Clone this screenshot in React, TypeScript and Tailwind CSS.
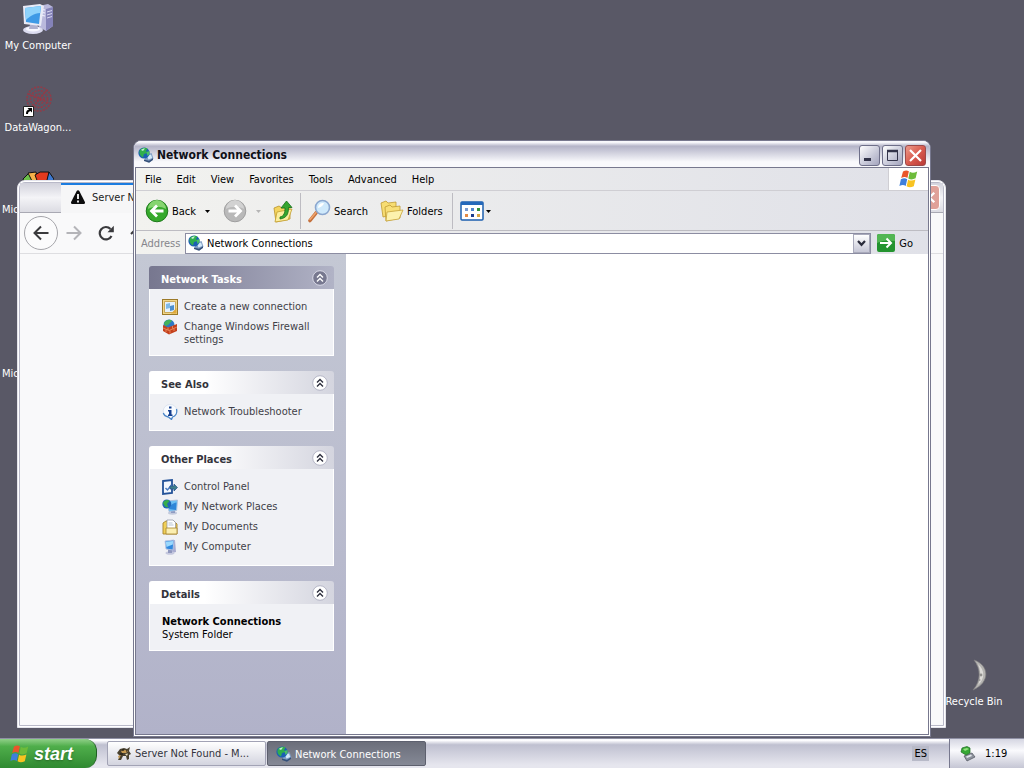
import type { ReactNode } from 'react';
import clsx from 'clsx';

const uiFont = "font-['DejaVu_Sans_Condensed','DejaVu_Sans','Noto_Sans',sans-serif]";

type IconProps = { className?: string };

function GlobeIcon({ className = 'size-4' }: IconProps) {
  return (
    <svg viewBox="0 0 16 16" className={className}>
      <path d="M8 8l5.500-2 2 5.500-4 4-5-3z" fill="#7f9dc4" />
      <path d="M9 9l4-1.500 1.200 3.500-3.700 1.500z" fill="#d3e9f8" />
      <path d="M6 12.500l5 1.200 4-2.400v1.700l-4 2.700-5-1.700z" fill="#35507a" />
      <circle cx="6" cy="6" r="5.600" fill="#1b5fb4" />
      <path d="M2 3c2-2.500 6-3 7.500-1.500L8 4l1.500 2L6 7l-1 3.500C2 9 .6 6 2 3z" fill="#2fae4e" />
      <path d="M8.500 5l3-1v3l-2 2z" fill="#47c065" />
      <path d="M3 3c1-1 2-1.500 4-1.500L5 4z" fill="#c4f0cd" />
    </svg>
  );
}

function ComputerIcon({ className = 'size-4' }: IconProps) {
  return (
    <svg viewBox="0 0 32 32" className={className}>
      <path d="M17 3l9-2 5 3v19l-7 5-7-4z" fill="#b9b8dc" />
      <path d="M24 6l7-2v19l-7 5z" fill="#8482b8" />
      <path d="M18 6l5 1M18 9l5 1M18 12l5 1" stroke="#f2f1ff" strokeWidth="1.200" />
      <path d="M25 9l5-1.500M25 12l5-1.500M25 15l5-1.500" stroke="#d9d8f2" strokeWidth="1" />
      <ellipse cx="11" cy="27" rx="10" ry="4" fill="#dcdcf0" />
      <ellipse cx="11" cy="26" rx="7" ry="2.500" fill="#f8f8ff" />
      <path d="M8 21h7l1 5H7z" fill="#aeb0cf" />
      <path d="M1 3l17-2 4 2-3 20-17-2z" fill="#e8eaf6" />
      <path d="M3 5l16-2-2 18-13-2z" fill="#3e9ae6" />
      <path d="M3 5l16-2-1 7C12 10 7 14 4 17z" fill="#8fd3fb" />
    </svg>
  );
}

function WindowsFlag({ className = 'size-5' }: IconProps) {
  return (
    <svg viewBox="0 0 20 20" className={className}>
      <path d="M4 2.500C6.500 1 8.200 1.200 9.900 2.300L8.400 9C6.600 7.800 4.700 7.800 2.200 9.100z" fill="#e9562b" />
      <path d="M10.800 2.800c2 1.200 4.400 1.200 7.400-.3l-1.600 6.800c-2.800 1.400-5 1.400-7.300.2z" fill="#6dbb3a" />
      <path d="M1.900 10.200c2.500-1.300 4.500-1.200 6.300 0l-1.500 6.700C5 15.800 2.900 15.700.4 17z" fill="#3f7fdb" />
      <path d="M9.100 10.700c2.100 1.200 4.500 1.100 7.300-.2l-1.600 6.700c-2.800 1.400-5.200 1.300-7.200.1z" fill="#f8c321" />
    </svg>
  );
}

function FolderUpIcon() {
  return (
    <svg viewBox="0 0 24 24" className="size-6">
      <path d="M3 9l5-2 3 2 8-1v12l-14 3z" fill="#f4d45e" stroke="#b9932a" strokeWidth=".8" />
      <path d="M6 13l15-3-4 11-13 2z" fill="#fcee9d" stroke="#c49f31" strokeWidth=".8" />
      <path d="M9 18c4-1 5-4 5-9h-4l5.500-7 5.500 6.500h-3.500c0 7-2 10.500-8.500 11.500z" fill="#35a52f" stroke="#16701a" strokeWidth=".8" />
    </svg>
  );
}

function FoldersIcon() {
  return (
    <svg viewBox="0 0 24 24" className="size-6">
      <path d="M1 4l5-2 2 2 8-1v12L3 18z" fill="#f7dd72" stroke="#bf9a32" strokeWidth=".8" />
      <path d="M5 8l5-2 2 2 8-1v12L6 22z" fill="#f8df77" stroke="#bf9a32" strokeWidth=".8" />
      <path d="M7 13l16-2-4 9-13 2z" fill="#fdf2ad" stroke="#c7a33b" strokeWidth=".8" />
    </svg>
  );
}

function SearchIcon() {
  return (
    <svg viewBox="0 0 24 24" className="size-6">
      <path d="M9 14l-6 7.500" stroke="#c4703c" strokeWidth="3.600" strokeLinecap="round" />
      <path d="M9 13.500l-6 7" stroke="#f0a36b" strokeWidth="1.500" strokeLinecap="round" />
      <circle cx="15.500" cy="8.500" r="7" fill="#cfe9fb" stroke="#8ba7cf" strokeWidth="1.600" />
      <path d="M11 9a5 5 0 0 1 6-5c-1 3-3 4-6 5z" fill="#fff" />
    </svg>
  );
}

function RoundArrowIcon({ direction }: { direction: 'back' | 'forward' }) {
  const back = direction === 'back';
  return (
    <svg viewBox="0 0 24 24" className="size-6">
      <circle cx="12" cy="12" r="10.800" fill={back ? '#36a92c' : '#b9b9b9'} stroke={back ? '#1f7a1c' : '#9f9f9f'} />
      <path d="M3 10a9 9 0 0 1 18 0c-5-3-13-3-18 0z" fill={back ? '#86d570' : '#d2d2d2'} />
      <path
        d={back ? 'M18.500 12H7M12 6.500L6.500 12l5.500 5.500' : 'M5.500 12H17M12 6.500l5.500 5.500-5.500 5.500'}
        fill="none"
        stroke="#fff"
        strokeWidth="2.800"
      />
    </svg>
  );
}

function ViewsIcon() {
  return (
    <svg viewBox="0 0 24 20" className="h-5 w-6">
      <rect x="1" y="1" width="22" height="18" rx="1" fill="#fff" stroke="#1d5fae" strokeWidth="1.500" />
      <path d="M1 1h22v3H1z" fill="#2468ba" />
      <path d="M5 7h3v3H5z" fill="#7a9bd0" />
      <path d="M11 7h3v3h-3z" fill="#4e86cf" />
      <path d="M17 7h3v3h-3z" fill="#31923c" />
      <path d="M5 13h3v3H5z" fill="#e58a43" />
      <path d="M11 13h3v3h-3z" fill="#1c3c8c" />
      <path d="M17 13h3v3h-3z" fill="#d9a640" />
    </svg>
  );
}

function NewConnectionIcon() {
  return (
    <svg viewBox="0 0 16 16" className="size-4">
      <rect x=".5" y=".5" width="15" height="15" fill="#f0d68a" stroke="#9c7a29" />
      <path d="M2.500 2.500h11v11h-11z" fill="#e4f1fb" stroke="#c39a3d" strokeWidth=".8" />
      <path d="M4 5l4-1v5l-4 1z" fill="#7fb9e6" />
      <path d="M8 7l4-1v5l-4 1z" fill="#4d8fcd" />
      <path d="M9 14.500l5.500-5.500v5.500z" fill="#e0a93a" />
    </svg>
  );
}

function FirewallIcon() {
  return (
    <svg viewBox="0 0 16 16" className="size-4">
      <circle cx="7" cy="6" r="5.500" fill="#2e78c4" />
      <path d="M2 4c2-4 7-4 8-2L6 6 3 7z" fill="#44b25a" />
      <path d="M1 6l5 2.500L15 5v7l-8 3.500-6-3.500z" fill="#c4401c" />
      <path d="M1 9l6 2.500 8-3.500M6 8.500v2.500M10.500 7v2.500M4 10.500v2.500M12 9.500V12M8 11.500v3" fill="none" stroke="#f4a070" strokeWidth=".7" />
    </svg>
  );
}

function InfoIcon() {
  return (
    <svg viewBox="0 0 16 16" className="size-4">
      <path d="M8 .5a7 6.500 0 0 1 3 12.300L9.500 15.500 7 13.400A7 6.500 0 0 1 8 .5z" fill="#f8fbff" stroke="#cfd9e8" strokeWidth=".6" />
      <path d="M14.500 5c1 4-1 7-4 8l-1 2.500-3-2.500C4 12.500 2 11.500 1.300 9" fill="none" stroke="#4b86c8" strokeWidth="1.300" />
      <path d="M7 2.500h2.500v2H7zM6 6h3.500v4.500h1V12H6v-1.500h1V7.500H6z" fill="#153f8f" />
    </svg>
  );
}

function ControlPanelIcon() {
  return (
    <svg viewBox="0 0 16 16" className="size-4">
      <path d="M1 2l9-1v13l-9 1z" fill="#f3f8ff" stroke="#235299" strokeWidth="1.800" />
      <path d="M3.500 9l2 2 4-5" fill="none" stroke="#4a7bc2" strokeWidth="1.500" />
      <path d="M8 7h4V5l3.500 3.500L12 12V10H8z" fill="#3f7f8a" stroke="#24508e" strokeWidth=".7" />
    </svg>
  );
}

function NetworkPlacesIcon() {
  return (
    <svg viewBox="0 0 16 16" className="size-4">
      <ellipse cx="10.500" cy="14" rx="4.500" ry="1.700" fill="#c3c9dc" />
      <path d="M9 11h4v3H9z" fill="#8d9ac0" />
      <path d="M5 2l10.500-1-.8 10.500L7 12.500z" fill="#6dc0f4" stroke="#adbcd8" strokeWidth=".8" />
      <path d="M7 10c1-4 4-6 7.500-6.500L14 11z" fill="#2f86d8" />
      <circle cx="4.800" cy="5" r="4.500" fill="#2066b6" />
      <path d="M1 4c1-3 5-4 6.500-2L5 5l1.500 3.500L3 7.500z" fill="#37ad4b" />
    </svg>
  );
}

function DocumentsIcon() {
  return (
    <svg viewBox="0 0 16 16" className="size-4">
      <path d="M1 4l3-2h8l3 3v10H1z" fill="#f0cf57" stroke="#a6842c" strokeWidth=".9" />
      <path d="M5 1h6l2.500 2.500V10H5z" fill="#fff" stroke="#8a8fa5" strokeWidth=".7" />
      <path d="M6.500 4h4M6.500 6h5" stroke="#9ab" strokeWidth=".7" />
      <path d="M4 9h11v6H4z" fill="#fbeeb0" stroke="#a6842c" strokeWidth=".8" />
    </svg>
  );
}

function SmallComputerIcon() {
  return (
    <svg viewBox="0 0 16 16" className="size-4">
      <path d="M9 1h4l1 12-4 1z" fill="#a9acd0" />
      <ellipse cx="8" cy="14" rx="4.500" ry="1.800" fill="#c5c8de" />
      <path d="M6 10h4v4H6z" fill="#8f97bd" />
      <path d="M3 2l9-1-1 10-7-1z" fill="#2f88de" stroke="#b7c3e2" strokeWidth=".9" />
      <path d="M3.700 2.700l7.500-.8-.4 3.500L4.500 8z" fill="#9bd8fc" />
    </svg>
  );
}

function FoxIcon() {
  return (
    <svg viewBox="0 0 16 16" className="size-4">
      <path d="M1 7l3-4 4-1 3 1 3-2-1 4 2 3-2 1v4l-2 1-1-4H7l-2 4H2l2-4z" fill="#49412f" />
      <path d="M5 5l4-1 3 1-2 2H6zM2 10l3-1-2 4z" fill="#c69a51" />
      <path d="M9 8l3-.5L11 10z" fill="#efe2bb" />
      <path d="M6 4h2M10 5h1M4 8h3" stroke="#17130c" strokeWidth="1" />
    </svg>
  );
}

function TrayIcon() {
  return (
    <svg viewBox="0 0 16 16" className="size-4">
      <path d="M4 10l8-3 3 4-8 4z" fill="#8d929d" stroke="#4d515b" strokeWidth=".7" />
      <path d="M6 10.500l5-2 1 1.500-5 2z" fill="#e2e6ec" />
      <path d="M2 2l5-1.500L10 2v5L6 9 1 6z" fill="#36a834" stroke="#1d6a21" strokeWidth=".7" />
      <path d="M3 3l4-1 2 1-4 2z" fill="#93e07e" />
    </svg>
  );
}

function RedSwirlIcon() {
  return (
    <svg viewBox="0 0 32 32" className="size-8">
      <g fill="none" stroke="#a5323e" strokeWidth="1.600" strokeDasharray="2 1.200" opacity=".75">
        <circle cx="17" cy="14" r="12" />
        <circle cx="17" cy="14" r="8.500" />
        <circle cx="17" cy="14" r="5" />
        <circle cx="17" cy="14" r="2" />
        <path d="M9 24L25 5M7 9l20 9" />
      </g>
      <path d="M1.500 21.500h10v10h-10z" fill="#fff" stroke="#222" />
      <path d="M4 29c0-3 1-4 3-4.500L5.500 23H10v4.500L8.500 26C7 26.500 6 27 6 29z" fill="#000" />
    </svg>
  );
}

function ColorWheelIcon() {
  return (
    <svg viewBox="0 0 32 32" className="size-8">
      <g stroke="#111" strokeWidth="1">
        <path d="M1 12l6-6 5 9-9 6z" fill="#6cc04a" />
        <path d="M6 6l8-1 2 10-4 3z" fill="#f6b24a" />
        <path d="M13 8l5-3h9l-2 13-9-2z" fill="#e23a1e" />
        <path d="M27 5l5 7-2 9-6-4z" fill="#3c78d0" />
      </g>
    </svg>
  );
}

function MoonIcon() {
  return (
    <svg viewBox="0 0 32 32" className="size-8">
      <path d="M16 1c15 5 17 22-1 30 8-9 8-21 1-30z" fill="#b4b3b1" stroke="#7b7a7d" strokeWidth=".7" />
      <path d="M20 5c7 6 7 15 0 21 3-7 3-14 0-21z" fill="#dcdbd8" />
      <circle cx="23" cy="16" r="1.400" fill="#908f8d" />
      <circle cx="21.500" cy="21" r="1" fill="#9c9b99" />
    </svg>
  );
}

function Caret({ muted = false }: { muted?: boolean }) {
  return (
    <svg viewBox="0 0 5 3" className="h-[3px] w-[5px]">
      <path d="M0 0h5L2.500 3z" fill={muted ? '#b5b5b5' : '#000'} />
    </svg>
  );
}

function DesktopIcon({ label, children }: { label: string; children?: ReactNode }) {
  return (
    <button type="button" className="flex h-[82px] w-[76px] flex-col items-center gap-1 pt-[3px] text-white">
      <span className="flex size-8 items-center justify-center">{children}</span>
      <span className="whitespace-nowrap">{label}</span>
    </button>
  );
}

function BrowserWindow() {
  return (
    <section className="absolute top-[180px] right-[78px] bottom-[10px] left-[17px] flex flex-col overflow-hidden rounded-t-lg border border-[#e4e4ec] bg-white p-px">
      <div className="flex min-h-0 flex-1 flex-col rounded-t-md border border-[#b9b9c8] bg-[#f9f9fa]">
        <header className="flex h-[30px] shrink-0">
          <div className="w-[41px] border-b border-[#a9a9b3] bg-linear-to-b from-[#d2d2dc] via-[#f4f4f7] to-[#dcdce3]" />
          <div className="flex w-60 items-center gap-1.5 border-t-2 border-[#1b7ce0] bg-[#f6f6f7] pr-2 pb-1 pl-[9px] text-[#222]">
            <svg viewBox="0 0 16 16" className="size-4">
              <path d="M8 1.200c.6 0 1 .3 1.300.8l5.600 11c.5 1-.1 2-1.300 2H2.400c-1.200 0-1.800-1-1.300-2L6.700 2c.3-.5.7-.8 1.300-.8z" fill="#0c0c0d" />
              <path d="M8 5v5M8 11.500v2" stroke="#fff" strokeWidth="1.800" />
            </svg>
            Server Not Found
          </div>
          <div className="flex flex-1 justify-end border-b border-[#a9a9b3] bg-linear-to-b from-[#d2d2dc] via-[#f4f4f7] to-[#dcdce3] pt-[2px] pr-[3px]">
            <button type="button" aria-label="Close browser" className="h-[25px] w-[21px] rounded-sm border border-white bg-[#e0a199] text-white">
              <svg viewBox="0 0 20 20" className="size-full">
                <path d="M5 5l10 10M15 5L5 15" stroke="#fff" strokeWidth="2.500" />
              </svg>
            </button>
          </div>
        </header>
        <nav className="flex h-[41px] shrink-0 items-center border-b border-[#dedee1] pl-1 text-[#3a3a3d]">
          <button type="button" aria-label="Previous page" className="flex size-[34px] items-center justify-center rounded-full border border-[#a5a5aa] bg-[#fbfbfc]">
            <svg viewBox="0 0 16 16" className="size-4" fill="none" stroke="currentColor" strokeWidth="2">
              <path d="M15.500 8H1.500M8 1.500L1.500 8 8 14.500" />
            </svg>
          </button>
          <button type="button" aria-label="Next page" className="ml-2 flex size-4 text-[#b4b4b8]">
            <svg viewBox="0 0 16 16" className="size-4" fill="none" stroke="currentColor" strokeWidth="2">
              <path d="M.5 8h14M8 1.500L14.500 8 8 14.500" />
            </svg>
          </button>
          <button type="button" aria-label="Reload" className="ml-4 flex size-4">
            <svg viewBox="0 0 16 16" className="size-4" fill="none" stroke="currentColor" strokeWidth="2.200">
              <path d="M13.500 11A6.200 6.200 0 1 1 12.500 4" />
              <path d="M15.800.8v6.400H9.500z" fill="currentColor" stroke="none" />
            </svg>
          </button>
          <button type="button" aria-label="Home" className="ml-4 flex size-4">
            <svg viewBox="0 0 16 16" className="size-4" fill="none" stroke="currentColor" strokeWidth="2">
              <path d="M1 9l7-7 7 7M5 8v7h7V8" />
            </svg>
          </button>
        </nav>
      </div>
    </section>
  );
}

function CaptionButton({ label, close = false, children }: { label: string; close?: boolean; children: ReactNode }) {
  return (
    <button
      type="button"
      aria-label={label}
      className={clsx(
        'size-[21px] rounded-[3px] border bg-linear-to-br',
        close ? 'border-[#9c4a4a] from-[#eb9a8c] via-[#d95b4f] to-[#b93a38]' : 'border-[#6e6f89] from-white via-[#cfd0de] to-[#a3a4bd]'
      )}
    >
      <svg viewBox="0 0 19 19" className="size-full" fill="none">
        {children}
      </svg>
    </button>
  );
}

function TitleBar() {
  return (
    <header className="flex h-[26px] shrink-0 items-center bg-linear-to-b from-[#f8f8fc] from-5% via-[#b4b4c8] via-20% to-[#f9f9fc] to-80% pt-[2px] pr-1 pl-1">
      <GlobeIcon />
      <h1 className="ml-[3px] flex-1 text-xs font-bold text-[#101018]">Network Connections</h1>
      <div className="flex gap-[2px]">
        <CaptionButton label="Minimize">
          <path d="M4 13.500h7" stroke="#33344a" strokeWidth="3" />
        </CaptionButton>
        <CaptionButton label="Maximize">
          <path d="M4.500 5v9.500h10V5" stroke="#33344a" />
          <path d="M4 5h11" stroke="#33344a" strokeWidth="2.500" />
        </CaptionButton>
        <CaptionButton label="Close" close>
          <path d="M4 4l11 11M15 4L4 15" stroke="#fff" strokeWidth="2.200" />
        </CaptionButton>
      </div>
    </header>
  );
}

const menuItems = ['File', 'Edit', 'View', 'Favorites', 'Tools', 'Advanced', 'Help'];

function MenuBar() {
  return (
    <nav className="flex h-[23px] shrink-0 border-b border-[#cfced3]">
      <div className="flex flex-1 items-center gap-[15px] pl-[9px]">
        {menuItems.map((item) => (
          <button key={item} type="button">
            {item}
          </button>
        ))}
      </div>
      <div className="flex w-10 items-center justify-center border-l border-[#cfced3] bg-white">
        <WindowsFlag />
      </div>
    </nav>
  );
}

function Toolbar() {
  return (
    <div className="flex h-10 shrink-0 items-center border-b border-[#bdbcc2] pt-px pl-[9px]">
      <button type="button" className="flex items-center gap-[3px]">
        <RoundArrowIcon direction="back" />
        Back
        <span className="ml-1.5">
          <Caret />
        </span>
      </button>
      <button type="button" aria-label="Forward" disabled className="ml-[13px] flex items-center gap-[9px]">
        <RoundArrowIcon direction="forward" />
        <Caret muted />
      </button>
      <button type="button" aria-label="Up" className="ml-[10px]">
        <FolderUpIcon />
      </button>
      <div className="mr-1.5 ml-[5px] h-9 w-px bg-[#bdbcc2]" />
      <button type="button" className="flex items-center gap-[3px]">
        <SearchIcon />
        Search
      </button>
      <button type="button" className="ml-3 flex items-center gap-[3px]">
        <FoldersIcon />
        Folders
      </button>
      <div className="mr-[7px] ml-[9px] h-9 w-px bg-[#bdbcc2]" />
      <button type="button" aria-label="Views" className="flex items-center gap-[2px]">
        <ViewsIcon />
        <Caret />
      </button>
    </div>
  );
}

function AddressBar() {
  return (
    <form className="flex h-[23px] shrink-0 items-center pt-px pr-[15px] pl-[5px]">
      <label htmlFor="address" className="w-11 text-[#85858b]">
        Address
      </label>
      <div className="flex h-[21px] flex-1 items-center border border-[#8c8da2] bg-white pl-[2px]">
        <GlobeIcon />
        <input id="address" defaultValue="Network Connections" className="ml-[3px] min-w-0 flex-1 pt-px outline-none" />
        <button
          type="button"
          aria-label="Show addresses"
          className="flex h-full w-[17px] items-center justify-center border border-[#a9aabb] bg-linear-to-b from-white to-[#c6c7d6]"
        >
          <svg viewBox="0 0 9 7" className="h-[7px] w-[9px]" fill="none">
            <path d="M1 1l3.500 3.800L8 1" stroke="#2b2c3c" strokeWidth="2.200" />
          </svg>
        </button>
      </div>
      <button type="button" className="ml-1.5 flex items-center gap-1">
        <svg viewBox="0 0 18 18" className="size-[18px]" fill="none">
          <rect width="18" height="18" rx="2" fill="#23932f" />
          <path d="M0 2a2 2 0 0 1 2-2h14a2 2 0 0 1 2 2v5C12 6 6 6 0 9z" fill="#52b653" />
          <path d="M3 9h11M9.500 4.500L14 9l-4.500 4.500" stroke="#fff" strokeWidth="2" />
        </svg>
        Go
      </button>
    </form>
  );
}

function TaskPanel({ title, primary = false, children }: { title: string; primary?: boolean; children: ReactNode }) {
  return (
    <section>
      <header
        className={clsx(
          'flex h-[23px] items-center justify-between rounded-t-[3px] bg-linear-to-r pr-1.5 pl-3',
          primary ? 'from-[#77778f] to-[#b1b3c6] text-white' : 'from-white from-30% to-[#d4d5df] text-[#33333b]'
        )}
      >
        <h2 className="pt-1 font-bold">{title}</h2>
        <button type="button" aria-label={`Collapse ${title}`}>
          <svg viewBox="0 0 16 16" className="size-4" fill="none">
            <circle cx="8" cy="8" r="7.300" fill={primary ? '#77788f' : '#fff'} stroke={primary ? '#d8d9e6' : '#b5b6c6'} />
            <path d="M5 7.500l3-3 3 3M5 11.500l3-3 3 3" stroke={primary ? '#fff' : '#2d2e3d'} strokeWidth="1.400" />
          </svg>
        </button>
      </header>
      <div className="border border-t-0 border-white bg-[#f0f1f5] pt-[11px] pb-[9px] pl-3 text-[#3f3f48]">{children}</div>
    </section>
  );
}

function TaskLinks({ items }: { items: { label: string; icon: ReactNode }[] }) {
  return (
    <ul className="flex flex-col gap-1">
      {items.map((item) => (
        <li key={item.label}>
          <a href="#" className="flex min-h-4 items-start gap-1.5 pr-4">
            <span className="-mt-px shrink-0">{item.icon}</span>
            <span>{item.label}</span>
          </a>
        </li>
      ))}
    </ul>
  );
}

const networkTasks = [
  { label: 'Create a new connection', icon: <NewConnectionIcon /> },
  { label: 'Change Windows Firewall settings', icon: <FirewallIcon /> },
];

const otherPlaces = [
  { label: 'Control Panel', icon: <ControlPanelIcon /> },
  { label: 'My Network Places', icon: <NetworkPlacesIcon /> },
  { label: 'My Documents', icon: <DocumentsIcon /> },
  { label: 'My Computer', icon: <SmallComputerIcon /> },
];

function ExplorerWindow() {
  return (
    <section className="absolute top-[140px] right-[93px] bottom-px left-[133px] flex flex-col overflow-hidden rounded-t-lg border border-[#77788e] bg-white">
      <TitleBar />
      <div className="mx-px mb-px flex min-h-0 flex-1 flex-col border border-[#77788e] bg-linear-to-r from-[#f2f2ef] to-[#e0e1e8]">
        <MenuBar />
        <Toolbar />
        <AddressBar />
        <div className="flex min-h-0 flex-1">
          <aside className="flex w-[210px] shrink-0 flex-col gap-[15px] bg-linear-to-b from-[#c4c8d4] to-[#b1b2c9] px-3 pt-3 pl-[13px]">
            <TaskPanel title="Network Tasks" primary>
              <TaskLinks items={networkTasks} />
            </TaskPanel>
            <TaskPanel title="See Also">
              <TaskLinks items={[{ label: 'Network Troubleshooter', icon: <InfoIcon /> }]} />
            </TaskPanel>
            <TaskPanel title="Other Places">
              <TaskLinks items={otherPlaces} />
            </TaskPanel>
            <TaskPanel title="Details">
              <p className="font-bold text-black">Network Connections</p>
              <p className="text-black">System Folder</p>
            </TaskPanel>
          </aside>
          <main className="flex-1 bg-white" />
        </div>
      </div>
    </section>
  );
}

function Taskbar() {
  return (
    <footer className="flex h-[30px] shrink-0 border-t border-[#8f90a4] bg-linear-to-b from-[#fdfdff] from-5% via-[#bfc0d0] via-20% to-[#e6e6ee] to-90%">
      <button
        type="button"
        className="flex w-[97px] items-center gap-1 rounded-r-xl border-r border-[#1f5f22] bg-linear-to-b from-[#8fd088] via-[#4fae4b] via-25% to-[#2f8a31] pl-[10px] font-['Liberation_Sans',sans-serif] text-lg font-bold text-white italic text-shadow-md"
      >
        <WindowsFlag />
        start
      </button>
      <div className="flex flex-1 gap-px py-[2px] pl-[10px]">
        <button
          type="button"
          className="flex w-[159px] items-center gap-[3px] rounded-[2px] border border-[#a2a3b5] bg-linear-to-b from-white to-[#d3d4df] pl-2 whitespace-nowrap text-[#33333c]"
        >
          <FoxIcon />
          Server Not Found - M...
        </button>
        <button
          type="button"
          className="flex w-[159px] items-center gap-[3px] rounded-[2px] border border-[#5d606e] bg-linear-to-b from-[#6b6e7a] to-[#858996] pt-px pl-2 whitespace-nowrap text-white"
        >
          <GlobeIcon />
          Network Connections
        </button>
      </div>
      <div className="mr-5 flex items-center">
        <span className="bg-[#b8bac8] px-[2px] py-px text-black">ES</span>
      </div>
      <div className="flex w-[75px] items-center gap-[9px] border-l border-[#77788e] bg-linear-to-b from-[#d5d6e2] via-[#fafafd] via-40% to-[#c5c6d4] pl-[10px] text-black">
        <TrayIcon />
        1:19
      </div>
    </footer>
  );
}

export default function App() {
  return (
    <div className={clsx('flex h-screen flex-col overflow-hidden bg-[#595866] text-[11px] leading-[13px] text-black', uiFont)}>
      <div className="relative min-h-0 flex-1 overflow-hidden">
        <div className="flex flex-col">
          <DesktopIcon label="My Computer">
            <ComputerIcon className="size-8" />
          </DesktopIcon>
          <DesktopIcon label="DataWagon...">
            <RedSwirlIcon />
          </DesktopIcon>
          <DesktopIcon label="Microsoft Off...">
            <ColorWheelIcon />
          </DesktopIcon>
          <DesktopIcon label="" />
          <DesktopIcon label="Microsoft Off..." />
          <DesktopIcon label="Outlook" />
        </div>
        <div className="absolute right-3 bottom-0">
          <DesktopIcon label="Recycle Bin">
            <MoonIcon />
          </DesktopIcon>
        </div>
        <BrowserWindow />
        <ExplorerWindow />
      </div>
      <Taskbar />
    </div>
  );
}
